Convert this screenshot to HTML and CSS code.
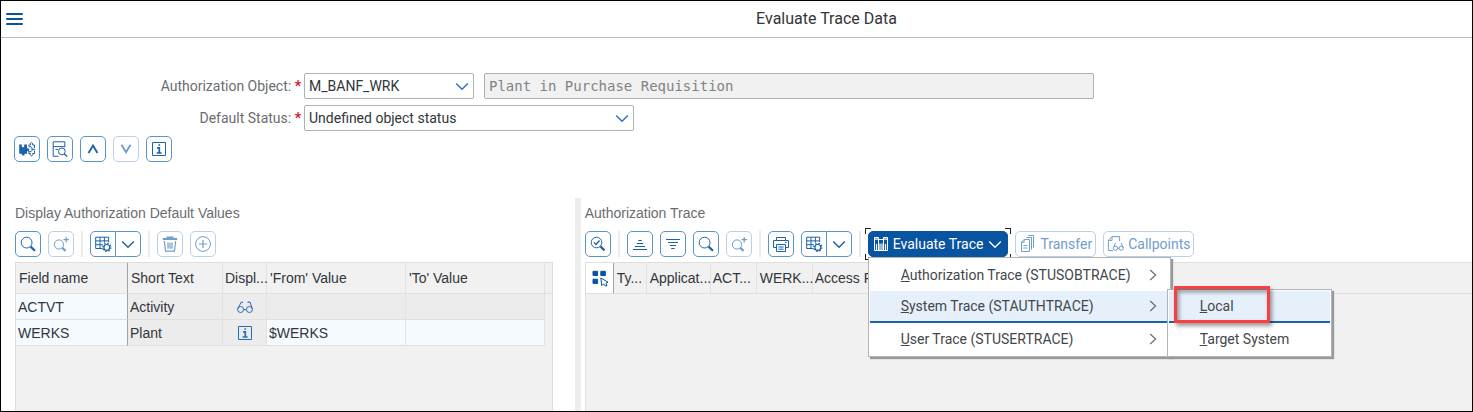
FILE: index.html
```html
<!DOCTYPE html>
<html lang="en">
<head>
<meta charset="utf-8">
<title>Evaluate Trace Data</title>
<link rel="stylesheet" href="styles.css">
</head>
<body>
<svg class="sprite" aria-hidden="true">
  <symbol id="i-search" viewBox="0 0 18 18"><circle cx="7.6" cy="7.6" r="5.4"/><path d="M11.6 11.6l4.4 4.2" stroke-width="2.2"/></symbol>
  <symbol id="i-search-plus" viewBox="0 0 18 18"><circle cx="7" cy="9.5" r="4.6"/><path d="M10.3 12.8l3.2 3.2" stroke-width="2.2"/><path d="M14.2 2v5.4M11.5 4.7h5.4" stroke-width="1.2"/></symbol>
  <symbol id="i-search-check" viewBox="0 0 18 18"><circle cx="7.5" cy="7.5" r="5.3"/><path d="M11.4 11.4l4 4" stroke-width="2.2"/><path d="M5 7.5l2 2 3.5-4" stroke-width="1.4"/></symbol>
  <symbol id="i-grid-gear" viewBox="0 0 18 18"><path d="M8.5 13.5H1.7V2.2h13v5M1.7 5.9h13M1.7 9.7h7M6 2.2v11.3M10.4 2.2v5.5"/><circle cx="12.8" cy="12.4" r="2.9" stroke-width="1.2"/><circle cx="12.8" cy="12.4" r="4" stroke-width="1.4" stroke-dasharray="1.5 1.64"/></symbol>
  <symbol id="i-down" viewBox="0 0 18 18"><path d="M3.2 6.5l5.8 5.8 5.8-5.8" stroke-width="1.4"/></symbol>
  <symbol id="i-trash" viewBox="0 0 18 18"><path d="M1.8 4h14.4M6.4 3.4V2.3h5.2v1.1" stroke-width="1.8"/><path d="M3.3 6l1.3 10.2h8.8L14.7 6M7 7.6v6.2M9 7.6v6.2M11 7.6v6.2" stroke-width="1.2"/></symbol>
  <symbol id="i-add" viewBox="0 0 18 18"><circle cx="9" cy="9" r="7.4"/><path d="M9 5v8M5 9h8" stroke-width="1.2"/></symbol>
  <symbol id="i-asc" viewBox="0 0 18 18"><path d="M7.2 5.5h3.6M5.8 8.5h6.4M4 11.5h10M2 14.5h14"/></symbol>
  <symbol id="i-desc" viewBox="0 0 18 18"><path d="M2 4.5h14M4 7.5h10M5.8 10.5h6.4M7.2 13.5h3.6"/></symbol>
  <symbol id="i-print" viewBox="0 0 18 18"><path d="M4.5 12.5H1.5v-7h15v7h-3M4.5 5.5v-3h9v3M4.5 9.5h9v7h-9zM6.3 12h5.4M6.3 14.2h5.4"/><path d="M13 7.5h1.6"/></symbol>
  <symbol id="i-puzzle" viewBox="0 0 18 18"><path d="M1.2 4.5h2.6v2.2a1.4 1.2 0 0 0 2.4 0V4.5H9v4a1.5 1.5 0 1 1 0 2.6v2.6H6.6a1.5 1.5 0 1 1-2.9 0H1.2z" fill="currentColor" stroke="none"/><path d="M10.8 6.5V5h1.6a1.3 1.5 0 1 1 2.2 0h1.9v3M10.8 7.5a1.4 1.4 0 0 1 3 1.8 1.4 1.4 0 0 1-3 1.6v2.6h1.6a1.3 1.5 0 1 0 2.2 0h1.9v-3M14 9.3h3"/></symbol>
  <symbol id="i-doc-search" viewBox="0 0 18 18"><path d="M7.5 16.3H2.2V1.8h11.6v5.4M2.2 6.6h11.6M4.5 9.5h2.3"/><circle cx="10.8" cy="11.4" r="3.4"/><path d="M13.2 13.8l2.9 2.8" stroke-width="1.4"/></symbol>
  <symbol id="i-caret-up" viewBox="0 0 18 18"><path d="M4.5 13L9 5.6l4.5 7.4" stroke-width="1.9"/></symbol>
  <symbol id="i-caret-down" viewBox="0 0 18 18"><path d="M4.5 4.8L9 12.2l4.5-7.4" stroke-width="1.9"/></symbol>
  <symbol id="i-info" viewBox="0 0 18 18"><path d="M2.5 2.5h13v13h-13z"/><path d="M7 7.8h2.3v5M6.6 13h5M8.4 5h1.7" stroke-width="1.7"/></symbol>
  <symbol id="i-glasses" viewBox="0 0 18 18"><circle cx="4.6" cy="11.5" r="3"/><circle cx="13.4" cy="11.5" r="3"/><path d="M1.6 11.2L5.3 4h1.2v1M7.6 11.6h2.8M16.4 11.2L14 4h-2v1"/></symbol>
  <symbol id="i-binders" viewBox="0 0 18 18"><path d="M2.5 2.5h4v13h-4zM6.5 4.5h5v11h-5zM11.5 2.5h4v13h-4z"/><path d="M2.5 4.2h4M11.5 4.2h4M4.5 9v6.5M8 8.5v7M10 8.5v7M13.5 9v6.5" stroke-width="1.2"/></symbol>
  <symbol id="i-copy" viewBox="0 0 18 18"><path d="M5.2 4.4L2.5 7.2v9.3h8v-12zM5.2 4.4v2.8H2.5M12.5 14.5V2.5H7.4M14.5 12.5v-12h-5M4.4 10.5h4M4.4 13h4"/></symbol>
  <symbol id="i-doc-glasses" viewBox="0 0 18 18"><path d="M6 15.6H1.4V5.4L5 1.6h7.6v4.6M5 1.6v3.8H1.4"/><circle cx="8.4" cy="13.2" r="2.1"/><circle cx="14.2" cy="13.2" r="2.1"/><path d="M6.4 12.8l2-4.8M16.2 12.8l-2-4.8M10.5 13.2h1.6"/></symbol>
  <symbol id="i-select" viewBox="0 0 18 18"><path d="M2 2.3h4.6v4.2H2zM9.8 2.3h4.6v4.2H9.8zM2 10.2h4.6v4.2H2z" fill="currentColor" stroke-linejoin="round"/><path d="M9.8 9l1 7.6 1.8-1.8 1.4 2h2l-1-2.6 2-1z"/></symbol>
  <symbol id="i-right" viewBox="0 0 18 18"><path d="M6.2 4l5.4 5-5.4 5" stroke-width="1.2"/></symbol>
</svg>

<header class="shell">
  <button class="menu-button" aria-label="Menu"><span></span><span></span><span></span></button>
  <h1 class="shell-title">Evaluate Trace Data</h1>
</header>

<form class="form">
  <label class="label" for="object">Authorization Object: <b class="star">*</b></label>
  <div class="fields">
    <div class="picker picker-short">
      <select id="object"><option>M_BANF_WRK</option></select>
      <svg class="icon"><use href="#i-down"/></svg>
    </div>
    <input class="readonly" type="text" aria-label="Object description" value="Plant in Purchase Requisition" readonly>
  </div>
  <label class="label" for="status">Default Status: <b class="star">*</b></label>
  <div class="fields">
    <div class="picker picker-long">
      <select id="status"><option>Undefined object status</option></select>
      <svg class="icon"><use href="#i-down"/></svg>
    </div>
  </div>
</form>

<div class="toolbar toolbar-page">
  <button class="tool" aria-label="Objects"><svg class="icon"><use href="#i-puzzle"/></svg></button>
  <button class="tool" aria-label="Details"><svg class="icon"><use href="#i-doc-search"/></svg></button>
  <button class="tool" aria-label="Previous"><svg class="icon"><use href="#i-caret-up"/></svg></button>
  <button class="tool" aria-label="Next" disabled><svg class="icon"><use href="#i-caret-down"/></svg></button>
  <button class="tool" aria-label="Information"><svg class="icon"><use href="#i-info"/></svg></button>
</div>

<main class="panes">
  <section class="pane pane-left">
    <h2 class="pane-title">Display Authorization Default Values</h2>
    <div class="toolbar">
      <button class="tool" aria-label="Find"><svg class="icon"><use href="#i-search"/></svg></button>
      <button class="tool" aria-label="Find next" disabled><svg class="icon"><use href="#i-search-plus"/></svg></button>
      <span class="separator"></span>
      <span class="split">
        <button class="tool" aria-label="Layout"><svg class="icon"><use href="#i-grid-gear"/></svg></button>
        <button class="tool" aria-label="Layout options"><svg class="icon"><use href="#i-down"/></svg></button>
      </span>
      <span class="separator"></span>
      <button class="tool" aria-label="Delete" disabled><svg class="icon"><use href="#i-trash"/></svg></button>
      <button class="tool" aria-label="Add" disabled><svg class="icon"><use href="#i-add"/></svg></button>
    </div>
    <div class="grid">
      <table class="table">
        <colgroup><col class="c-name"><col class="c-text"><col class="c-display"><col class="c-value"><col class="c-value"><col></colgroup>
        <thead>
          <tr><th class="fixed">Field name</th><th>Short Text</th><th class="tight">Displ...</th><th>'From' Value</th><th>'To' Value</th><th></th></tr>
        </thead>
        <tbody>
          <tr><td class="fixed key">ACTVT</td><td>Activity</td><td class="center"><svg class="icon"><use href="#i-glasses"/></svg></td><td></td><td></td><td class="gutter"></td></tr>
          <tr><td class="fixed key">WERKS</td><td>Plant</td><td class="center"><svg class="icon"><use href="#i-info"/></svg></td><td class="key">$WERKS</td><td class="key"></td><td class="gutter"></td></tr>
        </tbody>
      </table>
    </div>
  </section>

  <div class="splitter"></div>

  <section class="pane pane-right">
    <h2 class="pane-title">Authorization Trace</h2>
    <div class="toolbar">
      <button class="tool" aria-label="Details"><svg class="icon"><use href="#i-search-check"/></svg></button>
      <span class="separator"></span>
      <button class="tool" aria-label="Sort ascending"><svg class="icon"><use href="#i-asc"/></svg></button>
      <button class="tool" aria-label="Sort descending"><svg class="icon"><use href="#i-desc"/></svg></button>
      <button class="tool" aria-label="Find"><svg class="icon"><use href="#i-search"/></svg></button>
      <button class="tool" aria-label="Find next" disabled><svg class="icon"><use href="#i-search-plus"/></svg></button>
      <span class="separator"></span>
      <button class="tool" aria-label="Print"><svg class="icon"><use href="#i-print"/></svg></button>
      <span class="split">
        <button class="tool" aria-label="Layout"><svg class="icon"><use href="#i-grid-gear"/></svg></button>
        <button class="tool" aria-label="Layout options"><svg class="icon"><use href="#i-down"/></svg></button>
      </span>
      <span class="separator"></span>
      <div class="dropdown">
        <span class="corner tl"></span><span class="corner tr"></span><span class="corner bl"></span><span class="corner br"></span>
        <button class="tool wide primary" aria-haspopup="menu" aria-expanded="true"><svg class="icon"><use href="#i-binders"/></svg>Evaluate Trace<svg class="icon"><use href="#i-down"/></svg></button>
        <ul class="menu" role="menu">
          <li><button class="item" role="menuitem"><span><u>A</u>uthorization Trace (STUSOBTRACE)</span><svg class="icon"><use href="#i-right"/></svg></button></li>
          <li class="parent"><button class="item active" role="menuitem"><span><u>S</u>ystem Trace (STAUTHTRACE)</span><svg class="icon"><use href="#i-right"/></svg></button>
            <ul class="menu submenu" role="menu">
              <li><button class="item active" role="menuitem"><span><u>L</u>ocal</span></button></li>
              <li><button class="item" role="menuitem"><span><u>T</u>arget System</span></button></li>
              <li class="marker" role="none"></li>
            </ul>
          </li>
          <li><button class="item" role="menuitem"><span><u>U</u>ser Trace (STUSERTRACE)</span><svg class="icon"><use href="#i-right"/></svg></button></li>
        </ul>
      </div>
      <button class="tool wide" disabled><svg class="icon"><use href="#i-copy"/></svg>Transfer</button>
      <button class="tool wide" disabled><svg class="icon"><use href="#i-doc-glasses"/></svg>Callpoints</button>
    </div>
    <div class="grid">
      <table class="table">
        <colgroup><col class="c-select"><col class="c-type"><col class="c-app"><col class="c-act"><col class="c-werks"><col></colgroup>
        <thead>
          <tr><th class="fixed corner-cell"><svg class="icon"><use href="#i-select"/></svg></th><th>Ty...</th><th>Applicat...</th><th class="tight">ACT...</th><th>WERK...</th><th class="tight">Access F</th></tr>
        </thead>
      </table>
    </div>
  </section>
</main>
</body>
</html>
```
FILE: styles.css
```css
* { box-sizing: border-box; }

body {
  margin: 0;
  min-height: 100vh;
  display: flex;
  flex-direction: column;
  border: 1px solid #000;
  background: #fff;
  color: #32363a;
  font: 14px/20px Roboto, sans-serif;
}

button, input, select { font: inherit; color: inherit; margin: 0; }

.sprite { position: absolute; width: 0; height: 0; }

.icon {
  flex: none;
  display: block;
  width: 18px;
  height: 18px;
  fill: none;
  stroke: currentColor;
  stroke-width: 1;
}

/* Shell bar */
.shell {
  display: flex;
  align-items: center;
  height: 37px;
  padding-left: 5px;
  border-bottom: 1px solid #b0bccf;
}
.menu-button {
  display: flex;
  flex-direction: column;
  gap: 3px;
  width: 17px;
  padding: 0;
  border: 0;
  background: none;
}
.menu-button span { height: 2px; border-radius: 1px; background: #0854a0; }
.shell-title {
  flex: 1;
  margin: 0 0 0 158px;
  font-size: 16px;
  font-weight: 400;
  text-align: center;
}

/* Selection form */
.form {
  display: grid;
  grid-template-columns: 300px 1fr;
  column-gap: 3px;
  row-gap: 6px;
  padding-top: 35px;
  align-items: center;
}
.label { text-align: right; color: #6a6d70; }
.star { color: #d02020; }
.fields { display: flex; gap: 10px; }
.picker { display: grid; align-items: center; }
.picker > * { grid-area: 1 / 1; }
.picker .icon { justify-self: end; margin-right: 3px; color: #2a73bd; pointer-events: none; }
.picker-short { width: 170px; }
.picker-long { width: 330px; }
.picker select, .readonly {
  height: 26px;
  padding: 0 4px;
  border: 1px solid #a9b0b8;
  border-radius: 2px;
  background: #fff;
  appearance: none;
}
.readonly {
  flex: 0 1 610px;
  background: #f1f1f1;
  color: #808386;
  font-family: "DejaVu Sans Mono", monospace;
}

/* Toolbars */
.toolbar { display: flex; gap: 7px; }
.toolbar-page { padding: 5px 13px 0; }
.tool {
  display: flex;
  align-items: center;
  justify-content: center;
  width: 26px;
  height: 26px;
  padding: 0;
  border: 1px solid #5b93cb;
  border-radius: 5px;
  background: #fff;
  color: #1b62ab;
}
.tool:disabled { border-color: #b9d0e8; color: #6f9dcd; }
.wide { width: auto; gap: 3px; padding: 0 3px; }
.primary { border-color: #0854a0; background: #0854a0; color: #fff; }
.split { display: flex; }
.split .tool:first-child { border-radius: 5px 0 0 5px; }
.split .tool:last-child { width: 25px; border-left: 0; border-radius: 0 5px 5px 0; }
.separator { width: 2px; background: #ebebeb; }

/* Panes */
.panes { flex: 1; display: flex; margin-top: 36px; }
.pane { display: flex; flex-direction: column; min-width: 0; }
.pane-left { flex: 0 0 39%; padding: 0 22px 0 14px; }
.pane-right { flex: 1; padding-left: 4px; }
.splitter { flex: none; width: 6px; background: #eceeee; }
.pane-title {
  margin: 5px 0 8px;
  color: #6a6d70;
  font: 14px/20px "Liberation Sans", sans-serif;
}

/* Data grids */
.grid {
  flex: 1;
  margin-top: 5px;
  border: 1px solid #dedede;
  border-bottom: 0;
  background: #f1f1f1;
}
.pane-right .grid { border-right: 0; }
.table {
  width: 100%;
  table-layout: fixed;
  border-collapse: separate;
  border-spacing: 0;
  font: 14px/20px "Liberation Sans", sans-serif;
}
.table th, .table td {
  padding: 0 3px;
  border-right: 1px solid #e2e2e2;
  border-bottom: 1px solid #e0e0e0;
  font-weight: 400;
  text-align: left;
  white-space: nowrap;
}
.table th { height: 31px; }
.table td { height: 26px; background: #ececec; }
.table td:not(.center) { padding: 0 2px; }
.table th:last-child, .table td:last-child { border-right: 0; }
.table td.key { background: #f5faff; }
.table td.gutter { border-bottom: 0; background: #f1f1f1; }
.table .fixed { border-right: 1px solid #a0a2a4; }
.table .tight { padding: 0 2px; }
.table .corner-cell { padding: 0 5px; background: #fff; color: #0854a0; }
.center .icon { margin: 0 auto; color: #2a6cb4; }
.c-name { width: 112px; }
.c-text { width: 95px; }
.c-display { width: 44px; }
.c-value { width: 139px; }
.c-select { width: 28px; }
.c-type { width: 33px; }
.c-app { width: 64px; }
.c-act { width: 46px; }
.c-werks { width: 56px; }

/* Evaluate Trace drop-down */
.dropdown { position: relative; }
.corner { position: absolute; width: 6px; height: 6px; border: 0 solid #222; }
.tl { top: -3px; left: -3px; border-width: 1px 0 0 1px; }
.tr { top: -3px; right: -3px; border-width: 1px 1px 0 0; }
.bl { bottom: -3px; left: -3px; border-width: 0 0 1px 1px; }
.br { bottom: -3px; right: -3px; border-width: 0 1px 1px 0; }
.menu {
  position: absolute;
  z-index: 1;
  top: 26px;
  left: 0;
  width: 303px;
  margin: 0;
  padding: 1px;
  list-style: none;
  border: 1px solid #b4b4b4;
  background: #fff;
  box-shadow: 2px 2px 1px #999;
}
.item {
  display: flex;
  align-items: center;
  justify-content: space-between;
  width: 100%;
  height: 32px;
  padding: 0 7px 0 31px;
  border: 0;
  background: none;
  color: #43474b;
  text-align: left;
}
.item .icon { color: #6a6d70; }
.active { border-bottom: 2px solid #1b62ab; background: #e5f0fa; }
.parent { position: relative; }
.submenu { top: -2px; left: 297px; width: 165px; }
.marker {
  position: absolute;
  top: -4px;
  left: 6px;
  width: 96px;
  height: 37px;
  border: 3px solid #fb3f40;
  box-shadow: 2px 3px 4px #0006, inset 2px 3px 4px #0006;
}
```
